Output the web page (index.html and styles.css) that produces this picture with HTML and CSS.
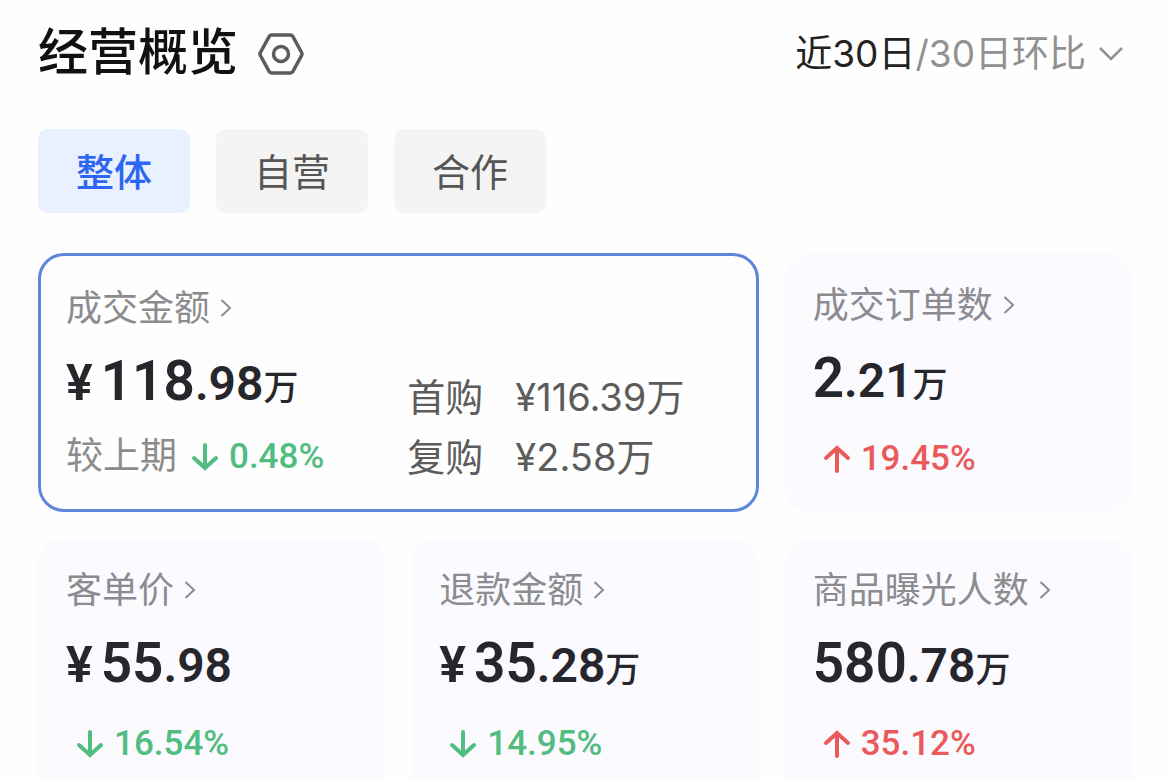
FILE: index.html
```
<!DOCTYPE html>
<html lang="zh-CN">
<head>
  <meta charset="UTF-8">
  <meta name="viewport" content="width=device-width, initial-scale=1.0">
  <title>经营概览</title>
  <link rel="stylesheet" href="styles.css">
</head>
<body>
  <svg class="sprite" aria-hidden="true">
    <symbol id="arrow-right" viewBox="0 0 12 20"><path d="M1.5 2L10 10L1.5 18"/></symbol>
    <symbol id="arrow-up" viewBox="0 0 28 28"><path d="M14 26V3M3 13L14 3L25 13"/></symbol>
    <symbol id="arrow-down" viewBox="0 0 28 28"><path d="M14 2V25M3 15L14 25L25 15"/></symbol>
  </svg>
  <div class="overview">
    <div class="header">
      <div class="title">
        <h1>经营概览</h1>
        <button class="setting" aria-label="设置">
          <svg viewBox="0 0 46 42"><path d="M13.500 2H32.500Q34 2 34.800 3.300L43.600 19.500Q44.400 21 43.600 22.500L34.800 38.700Q34 40 32.500 40H13.500Q12 40 11.200 38.700L2.400 22.500Q1.600 21 2.400 19.500L11.200 3.300Q12 2 13.500 2Z"/><circle cx="23" cy="21" r="7.500"/></svg>
        </button>
      </div>
      <button class="period" aria-haspopup="true">
        <span>近30日<span class="compare">/30日环比</span></span>
        <svg viewBox="0 0 26 16"><path d="M2 2L13 13L24 2"/></svg>
      </button>
    </div>
    <div class="tabs">
      <button class="tab active">整体</button>
      <button class="tab">自营</button>
      <button class="tab">合作</button>
    </div>
    <div class="cards">
      <div class="card card-main">
        <div class="card-left">
          <a class="label" href="#">成交金额<svg><use href="#arrow-right"/></svg></a>
          <div class="value"><span class="yen">¥</span><span class="int">118</span>.98<span class="unit">万</span></div>
          <div class="change down"><span class="prev">较上期</span><svg><use href="#arrow-down"/></svg>0.48%</div>
        </div>
        <dl class="detail">
          <dt>首购</dt><dd>¥116.39万</dd>
          <dt>复购</dt><dd>¥2.58万</dd>
        </dl>
      </div>
      <div class="card">
        <a class="label" href="#">成交订单数<svg><use href="#arrow-right"/></svg></a>
        <div class="value"><span class="int">2</span>.21<span class="unit">万</span></div>
        <div class="change indent up"><svg><use href="#arrow-up"/></svg>19.45%</div>
      </div>
      <div class="card">
        <a class="label" href="#">客单价<svg><use href="#arrow-right"/></svg></a>
        <div class="value"><span class="yen">¥</span><span class="int">55</span>.98</div>
        <div class="change indent down"><svg><use href="#arrow-down"/></svg>16.54%</div>
      </div>
      <div class="card">
        <a class="label" href="#">退款金额<svg><use href="#arrow-right"/></svg></a>
        <div class="value"><span class="yen">¥</span><span class="int">35</span>.28<span class="unit">万</span></div>
        <div class="change indent down"><svg><use href="#arrow-down"/></svg>14.95%</div>
      </div>
      <div class="card">
        <a class="label" href="#">商品曝光人数<svg><use href="#arrow-right"/></svg></a>
        <div class="value"><span class="int">580</span>.78<span class="unit">万</span></div>
        <div class="change indent up"><svg><use href="#arrow-up"/></svg>35.12%</div>
      </div>
    </div>
  </div>
</body>
</html>
```
FILE: styles.css
```
*{
  margin: 0;
  padding: 0;
  box-sizing: border-box;
}
body{
  color: #111113;
  background-color: #fefefe;
  font-family: Inter,"Noto Sans CJK SC",sans-serif;
}
a{
  text-decoration: none;
}
button{
  border: none;
  background: none;
  font-family: inherit;
  color: inherit;
  cursor: pointer;
}
svg{
  fill: none;
  stroke: currentColor;
  flex: none;
}
.sprite{
  position: absolute;
  width: 0;
  height: 0;
}
.overview{
  padding: 18px 38px 28px;
}
.header{
  display: flex;
  justify-content: space-between;
  align-items: center;
  height: 72px;
}
.title{
  display: flex;
  align-items: center;
  gap: 20px;
}
.title h1{
  padding-bottom: 4px;
  font-size: 50px;
  line-height: 68px;
  font-weight: 500;
}
.setting{
  display: flex;
  color: #5c5c5c;
}
.setting svg{
  width: 46px;
  height: 42px;
  stroke-width: 3.5;
}
.period{
  display: flex;
  align-items: center;
  gap: 12px;
  padding-right: 8px;
  font-size: 37px;
  line-height: 54px;
  color: #222;
}
.period .compare{
  color: #919191;
}
.period svg{
  width: 26px;
  height: 16px;
  color: #919191;
  stroke-width: 2.5;
}
.tabs{
  display: flex;
  gap: 26px;
  margin: 39px 0 40px;
}
.tab{
  height: 84px;
  padding: 0 38px 4px;
  border-radius: 10px;
  font-size: 38px;
  color: #555;
  background-color: #f4f4f4;
}
.tab.active{
  color: #2d66f0;
  font-weight: 500;
  background-color: #e9f0ff;
}
.cards{
  display: grid;
  grid-template-columns: repeat(3, 1fr);
  gap: 26px;
}
.card{
  min-height: 259px;
  padding: 27px 28px 20px;
  border-radius: 26px;
  background-color: #fafaff;
}
.card-main{
  grid-column: span 2;
  display: grid;
  grid-template-columns: 1fr 1fr;
  gap: 18px;
  padding: 27px 25px 22px;
  border: 3px solid #5b86dc;
  background-color: #fefefe;
}
.label{
  display: flex;
  align-items: center;
  gap: 10px;
  font-size: 36px;
  line-height: 50px;
  color: #8c8c90;
  white-space: nowrap;
}
.label svg{
  width: 12px;
  height: 20px;
  stroke-width: 2;
}
.value{
  height: 66px;
  margin-top: 13px;
  font-family: Roboto,"Noto Sans CJK SC",sans-serif;
  font-size: 48px;
  line-height: 70px;
  font-weight: 600;
  color: #26262c;
  white-space: nowrap;
}
.value .yen{
  margin-right: 8px;
  font-size: 50px;
}
.value .int{
  font-size: 55px;
}
.value .unit{
  font-size: 35px;
  font-weight: 500;
}
.change{
  display: flex;
  align-items: center;
  height: 50px;
  margin-top: 25px;
  font-family: Roboto,"Noto Sans CJK SC",sans-serif;
  font-size: 35px;
  line-height: 50px;
  font-weight: 500;
}
.card-main .change{
  margin-top: 20px;
}
.change.indent{
  padding-left: 10px;
}
.change svg{
  width: 28px;
  height: 28px;
  margin-right: 10px;
  stroke-width: 4;
  stroke-linecap: round;
}
.change .prev{
  margin-right: 14px;
  font-size: 37px;
  font-weight: 400;
  color: #8c8c8c;
}
.up{
  color: #eb5a5a;
}
.down{
  color: #52bd80;
}
.detail{
  align-self: end;
  display: grid;
  grid-template-columns: auto 1fr;
  column-gap: 32px;
  font-size: 38px;
  line-height: 60px;
  color: #5c5c5c;
  white-space: nowrap;
}
```
